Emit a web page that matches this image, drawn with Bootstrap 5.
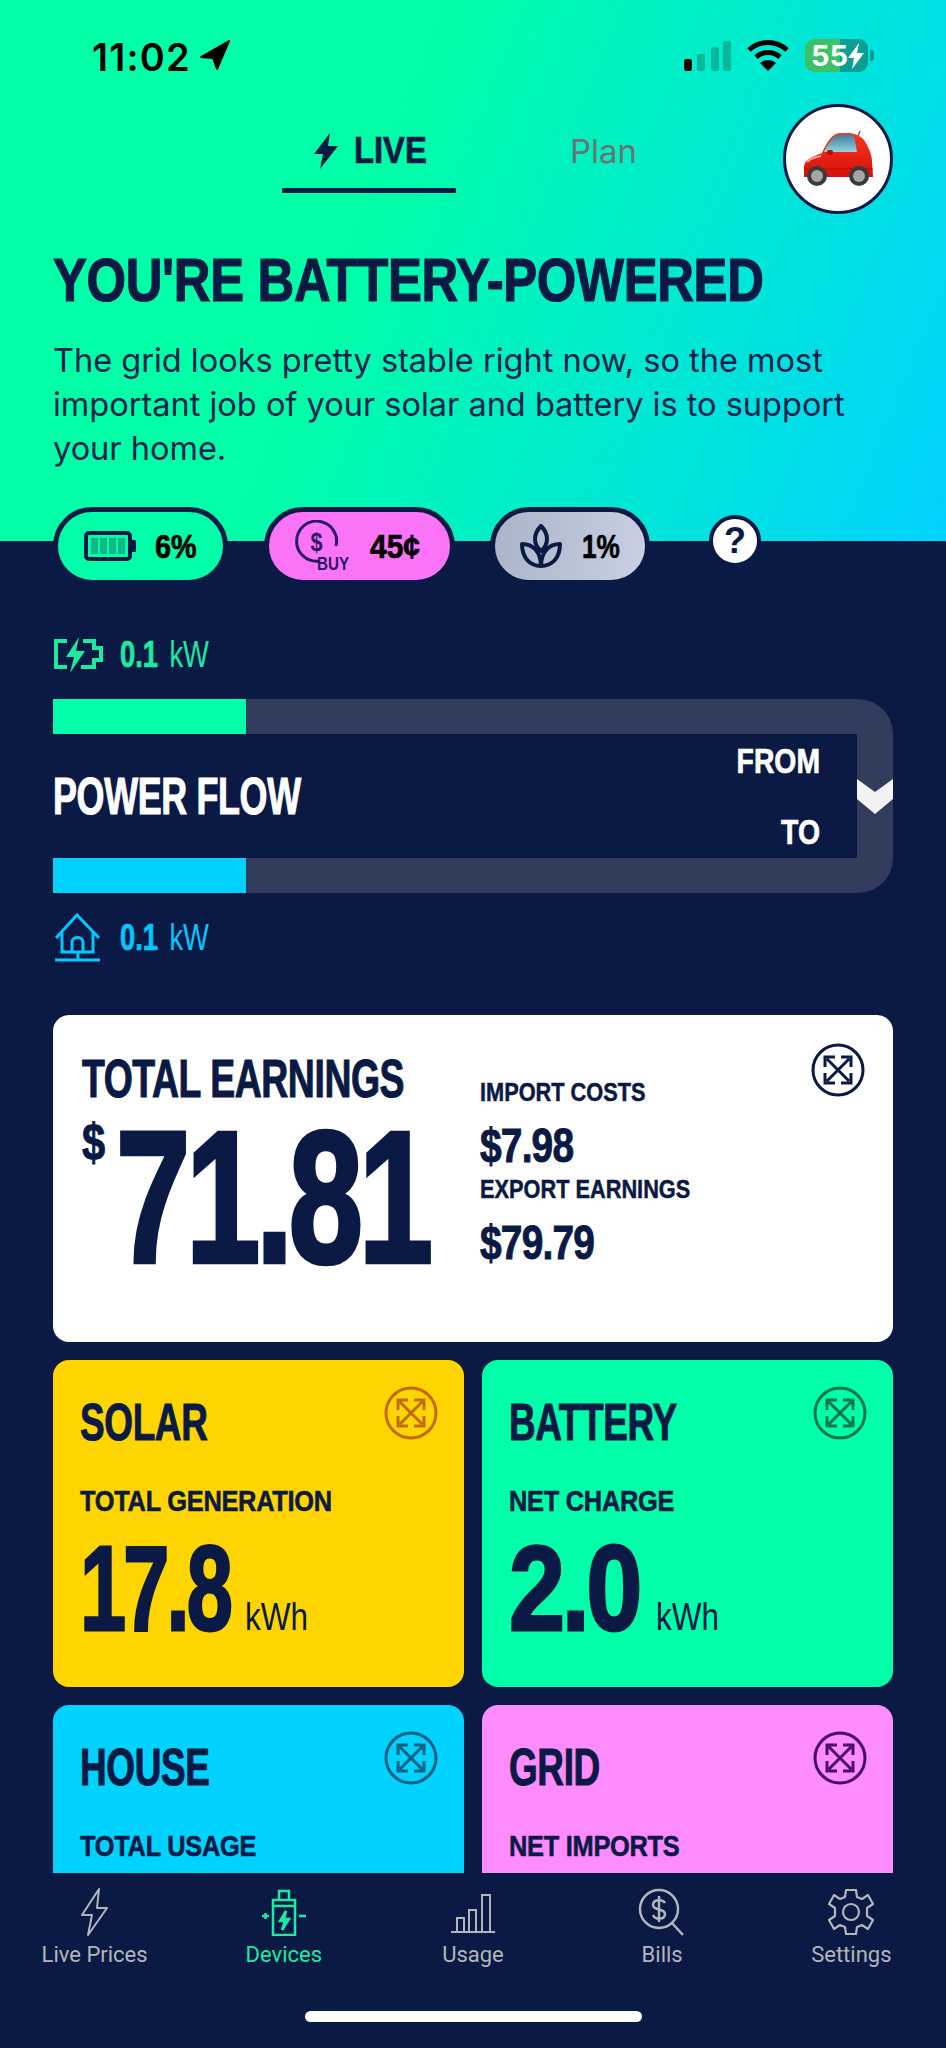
<!DOCTYPE html>
<html lang="en">
<head>
    <meta charset="UTF-8">
    <meta name="viewport" content="width=device-width, initial-scale=1.0">
    <title>Devices</title>
    <link href="https://cdn.jsdelivr.net/npm/bootstrap@5.3.0/dist/css/bootstrap.min.css" rel="stylesheet">
    <style>
        :root { --navy: #0b1a44; --mint: #00ffa8; --sky: #00d2ff; }
        body { background: var(--navy); color: var(--navy); font-family: "Inter", "Liberation Sans", sans-serif; }
        .app { width: 946px; height: 2048px; overflow: hidden; }
        /* no condensed face installed, so squeeze the bold one */
        .narrow { display: inline-block; white-space: nowrap; font-family: "Liberation Sans", sans-serif; font-weight: 700; -webkit-text-stroke: .02em currentColor; transform-origin: left center; transform: scaleX(var(--sx, .8)); }

        .hero { height: 541px; padding: 0 53px; background: linear-gradient(112deg, #00ffa6 38%, #00d2ff 100%); }
        .status-row { height: 104px; padding: 39px 19px 0 39px; }
        .clock { font-size: 38px; font-weight: 600; line-height: 36px; color: #000; letter-spacing: 1.2px; }
        .batt-pill { width: 63px; height: 33px; border-radius: 9px; color: #fff; font-size: 29px; font-weight: 700; line-height: 33px; padding-left: 6px;
            background: linear-gradient(90deg, #3cc168 55%, #0a9e94 55%); }
        .batt-tip { width: 4px; height: 11px; margin: 11px 0 0 2px; border-radius: 0 3px 3px 0; background: #0a9e94; }

        .tab-row { height: 110px; }
        .tab-live { width: 174px; height: 89px; border-bottom: 5px solid var(--navy); margin-left: 229px; padding: 29px 0 0 32px; font-size: 36px; line-height: 36px; --sx: .91; }
        .tab-plan { font-size: 33px; line-height: 36px; color: #667676; margin-left: 114px; padding-top: 29px; width: 213px; }
        .avatar { width: 110px; height: 110px; border: 3px solid var(--navy); background: #fff; border-radius: 50%; }

        .hero-title { font-size: 61px; line-height: 62px; margin: 35px 0 28px; letter-spacing: -.4px; --sx: .833; display: block; }
        .hero-text { font-size: 32.5px; line-height: 44px; margin: 0; white-space: nowrap; color: #10224c; }

        .chip-row { margin-top: 36px; height: 78px; position: relative; }
        .chip { height: 78px; border: 5px solid var(--navy); border-radius: 39px; color: #000; font-size: 34px; flex: none; }
        .chip-batt { width: 175px; background: var(--mint); padding-left: 26px; gap: 18px; --sx: .85; }
        .chip-buy { width: 191px; background: #fb74f8; margin-left: 36px; padding-left: 26px; gap: 20px; --sx: .88; }
        .chip-co2 { width: 160px; background: linear-gradient(100deg, #abb3c9, #c8d0e2); margin-left: 35px; padding-left: 25px; gap: 20px; --sx: .77; }
        .chip-help { width: 52px; height: 52px; border: 4px solid var(--navy); border-radius: 50%; background: #fff; font-family: "Liberation Sans", sans-serif; font-size: 36px; margin-left: 59px; margin-top: 8px; line-height: 1; font-weight: 700; }

        .flow { padding: 94px 53px 0; height: 474px; }
        .reading { font-size: 36px; line-height: 40px; height: 40px; gap: 17px; --sx: .76; }
        .reading .unit { font-weight: 400; -webkit-text-stroke: 0; margin-left: 15px; }
        .read-mint { color: #1de9a0; }
        .read-sky { color: #00c8ff; }
        .flow-track { margin: 24px 0 25px; }
        .flow-bar { height: 35px; background: #323d5e; }
        .flow-bar.top { border-top-right-radius: 36px; }
        .flow-bar.bottom { border-bottom-right-radius: 36px; }
        .flow-fill { height: 100%; }
        .flow-mid { height: 124px; }
        .flow-label { flex: 1; background: var(--navy); color: #fff; padding-right: 37px; }
        .flow-title { font-size: 52px; line-height: 52px; letter-spacing: -.5px; --sx: .69; }
        .flow-dir { font-size: 35px; line-height: 36px; gap: 35px; --sx: .81; }
        .flow-dir .narrow { transform-origin: right center; }
        .flow-rail { width: 36px; background: #323d5e; }

        .tiles { padding: 0 53px; }
        .tiles-clip { height: 858px; overflow: hidden; }
        .tile-row { --bs-gutter-x: 18px; --bs-gutter-y: 18px; margin-top: 0; }
        .tile { border: 0; border-radius: 16px; height: 327px; padding: 0 26px 0 27px; }
        .tile-total { background: #fff; padding: 0 28px 0 29px; }
        .total-left { width: 398px; flex: none; }
        .total-head { font-size: 53px; line-height: 52px; letter-spacing: -.6px; margin-top: 38px; --sx: .705; display: block; }
        .total-cur { width: 34px; flex: none; }
        .total-cur .narrow { font-size: 52px; line-height: 52px; margin-top: 11px; --sx: .8; }
        .total-num { font-size: 188px; line-height: 150px; letter-spacing: -6px; margin-top: 17px; --sx: .71; -webkit-text-stroke: .024em currentColor; }
        .total-side { padding-top: 62px; }
        .side-label { font-size: 25px; line-height: 30px; --sx: .87; display: block; }
        .side-val { font-size: 48px; line-height: 58px; letter-spacing: -1px; --sx: .81; display: block; margin-top: 10px; margin-bottom: -1px; }
        .tile-title { font-size: 52px; line-height: 52px; letter-spacing: -.5px; margin-top: 36px; --sx: .71; }
        .tile-sub { font-size: 29px; line-height: 34px; margin-top: 36px; letter-spacing: -.3px; --sx: .875; display: block; }
        .tile-figure { margin-top: 20px; }
        .tile-num { font-size: 120px; line-height: 100px; letter-spacing: -4px; -webkit-text-stroke: .024em currentColor; }
        .num-solar { width: 165px; flex: none; --sx: .69; }
        .num-batt { width: 147px; flex: none; --sx: .84; }
        .tile-unit { font-size: 38px; font-weight: 400; -webkit-text-stroke: 0; --sx: .83; }
        .tile-solar { background: #ffd500; }
        .tile-batt { background: var(--mint); }
        .tile-house { background: var(--sky); }
        .tile-grid { background: #ff8cff; }
        .grow-btn { width: 54px; height: 54px; flex: none; margin-top: 26px; }
        .tile-total .grow-btn { margin-top: 28px; }
        .grow-solar { color: #c46a00; }
        .grow-batt { color: #06744e; }
        .grow-house { color: #0a5f82; }
        .grow-grid { color: #4a0a6a; }

        .tab-bar { height: 175px; background: var(--navy); padding-top: 15px; }
        .tab-item { width: 20%; color: #b2b5ba; font-size: 22px; line-height: 26px; font-family: "Roboto", sans-serif; }
        .tab-item.on { color: #1de9a0; }
        .tab-item svg { display: block; height: 48px; margin-bottom: 6px; }
        .home-bar { width: 337px; height: 11px; border-radius: 6px; background: #fff; margin: 43px auto 0; }
        .sprite { position: absolute; width: 0; height: 0; }
    </style>
</head>
<body>
    <svg class="sprite">
        <symbol id="i-grow" viewBox="0 0 54 54">
            <g fill="none" stroke="currentColor" stroke-width="3">
                <circle cx="27" cy="27" r="25"/>
                <path d="M16 16 38 38M38 16 16 38M14 24V14H24M30 14H40V24M40 30V40H30M24 40H14V30"/>
            </g>
        </symbol>
        <linearGradient id="car-glass" x1="0" y1="0" x2="0" y2="1">
            <stop offset="0" stop-color="#3f7f9f"/><stop offset="1" stop-color="#92d3df"/>
        </linearGradient>
        <linearGradient id="car-paint" x1="0" y1="0" x2="0" y2="1">
            <stop offset="0" stop-color="#f5382a"/><stop offset="1" stop-color="#d80f08"/>
        </linearGradient>
    </svg>

    <div class="app d-flex flex-column">
        <div class="hero">
            <div class="status-row d-flex">
                <div class="clock d-flex align-items-start gap-2">11:02
                    <svg width="32" height="32" viewBox="0 0 32 32"><path d="M30 2 2 18l12 1 4 11z" fill="#000" stroke="#000" stroke-linejoin="round" stroke-width="2"/></svg>
                </div>
                <div class="d-flex ms-auto align-items-start">
                    <svg width="47" height="32" viewBox="0 0 47 32">
                        <rect x="0" y="20" width="8" height="12" rx="2" fill="#000"/>
                        <rect x="13" y="15" width="8" height="17" rx="2" fill="#0bb79a"/>
                        <rect x="27" y="8" width="8" height="24" rx="2" fill="#0bb79a"/>
                        <rect x="39" y="2" width="8" height="30" rx="2" fill="#0bb79a"/>
                    </svg>
                    <svg class="mx-3" width="42" height="33" viewBox="0 0 42 33" fill="none" stroke="#000" stroke-width="5">
                        <path d="M2 11C13 1 29 1 40 11M9 18C16 12 26 12 33 18"/>
                        <path d="M13 24 21 32 29 24C24 20 18 20 13 24Z" fill="#000" stroke="none"/>
                    </svg>
                    <div class="batt-pill d-flex align-items-center">55
                        <svg width="16" height="26" viewBox="0 0 16 26"><path d="M11 0 0 15h6l-2 11 12-16H9z" fill="#fff"/></svg>
                    </div>
                    <div class="batt-tip"></div>
                </div>
            </div>

            <div class="tab-row d-flex">
                <div class="tab-live d-flex gap-3 align-items-start">
                    <svg width="24" height="36" viewBox="0 0 24 36"><path d="M16 0 0 21h9L6 36 24 13H14z" fill="#0b1a44"/></svg>
                    <span class="narrow">LIVE</span>
                </div>
                <div class="tab-plan">Plan</div>
                <div class="avatar flex-shrink-0 d-flex align-items-center justify-content-center">
                    <svg width="70" height="56" viewBox="0 0 70 56">
                        <path d="M57 0 55 5" stroke="#666" stroke-width="1.5"/>
                        <path d="M1 46V35C2 29 8 26 19 22 24 11 29 3 36 2H47C54 3 60 6 63 12 66 18 69 24 69 30L70 46Z" fill="url(#car-paint)"/>
                        <path d="M21 21C25 12 30 5 36 4H50C52 8 53 15 54 21Z" fill="url(#car-glass)"/>
                        <path d="M1 38H70" stroke="#b50d06" stroke-width="1"/>
                        <path d="M4 31C7 28 12 26 18 25" stroke="#ff9d90" stroke-width="2" fill="none"/>
                        <rect x="24" y="19" width="6" height="5" rx="2" fill="#b50d06"/>
                        <circle cx="14" cy="45" r="10" fill="#3a3a3a"/><circle cx="14" cy="45" r="6" fill="#a5a5a5"/>
                        <circle cx="56" cy="45" r="10" fill="#3a3a3a"/><circle cx="56" cy="45" r="6" fill="#a5a5a5"/>
                    </svg>
                </div>
            </div>

            <h1 class="hero-title narrow">YOU'RE BATTERY-POWERED</h1>
            <p class="hero-text">The grid looks pretty stable right now, so the most<br>important job of your solar and battery is to support<br>your home.</p>

            <div class="chip-row d-flex">
                <div class="chip chip-batt d-flex align-items-center">
                    <svg width="53" height="30" viewBox="0 0 53 30">
                        <rect x="2" y="2" width="44" height="26" rx="3" fill="none" stroke="#0b1a44" stroke-width="4"/>
                        <path d="M48 9h3a1 1 0 0 1 1 1v10a1 1 0 0 1-1 1h-3z" fill="#0b1a44"/>
                        <path d="M7 7h7v16H7zM16 7h7v16h-7zM25 7h7v16h-7zM34 7h7v16h-7z" fill="#12b987"/>
                    </svg>
                    <span class="narrow">6%</span>
                </div>
                <div class="chip chip-buy d-flex align-items-center">
                    <svg width="55" height="52" viewBox="0 0 55 52" fill="none" stroke="#2b1a64" stroke-width="3">
                        <path d="M41 26A20 20 0 1 0 24 41"/>
                        <text x="21.5" y="31" font-size="25" text-anchor="middle" fill="#2b1a64" stroke="none" font-family="Liberation Sans, sans-serif" font-weight="700" textLength="12" lengthAdjust="spacingAndGlyphs">$</text>
                        <text x="22" y="50" font-size="19" fill="#2b1a64" stroke="none" font-family="Liberation Sans, sans-serif" font-weight="700" textLength="32" lengthAdjust="spacingAndGlyphs">BUY</text>
                    </svg>
                    <span class="narrow">45¢</span>
                </div>
                <div class="chip chip-co2 d-flex align-items-center">
                    <svg width="42" height="44" viewBox="0 0 42 44" fill="none" stroke="#0b1a44" stroke-width="4" stroke-linejoin="round">
                        <path d="M21 2C13 10 13 20 21 27 29 20 29 10 21 2Z"/>
                        <path d="M21 42C10 42 2 34 2 20 13 20 21 28 21 42 21 28 29 20 40 20 40 34 32 42 21 42Z"/>
                    </svg>
                    <span class="narrow">1%</span>
                </div>
                <div class="chip-help d-flex align-items-center justify-content-center flex-shrink-0">?</div>
            </div>
        </div>

        <div class="flow">
            <div class="reading read-mint d-flex align-items-center">
                <svg width="50" height="36" viewBox="0 0 50 36" fill="none" stroke="#1de9a0" stroke-width="4">
                    <path d="M14 4H3V30H14M30 4H41V11H48V23H41V30H28"/>
                    <path d="M26 0 13 20H21L17 36 32 14H23Z" fill="#1de9a0" stroke="none"/>
                </svg>
                <span class="narrow">0.1<span class="unit">kW</span></span>
            </div>
            <div class="flow-track">
                <div class="flow-bar top"><div class="flow-fill" style="width:193px;background:#00ffa8"></div></div>
                <div class="flow-mid d-flex">
                    <div class="flow-label d-flex align-items-center justify-content-between">
                        <div class="flow-title narrow">POWER FLOW</div>
                        <div class="flow-dir d-flex flex-column align-items-end">
                            <span class="narrow">FROM</span>
                            <span class="narrow">TO</span>
                        </div>
                    </div>
                    <div class="flow-rail d-flex align-items-center">
                        <svg width="36" height="35" viewBox="0 0 36 35"><path d="M0 0 18 13 36 0V20L18 35 0 20Z" fill="#f2f2f2"/></svg>
                    </div>
                </div>
                <div class="flow-bar bottom"><div class="flow-fill" style="width:193px;background:#00d2ff"></div></div>
            </div>
            <div class="reading read-sky d-flex align-items-center">
                <svg width="50" height="50" viewBox="0 0 50 50" fill="none" stroke="#00c8ff" stroke-width="3">
                    <path d="M3 25 24 2 46 25M9 19V39H40V19M19 39V29C19 23 30 23 30 29V39M25 39V47M2 47H47"/>
                </svg>
                <span class="narrow">0.1<span class="unit">kW</span></span>
            </div>
        </div>

        <div class="tiles flex-grow-1">
            <div class="tiles-clip">
                <div class="card tile tile-total flex-row">
                    <div class="total-left">
                        <div class="total-head narrow">TOTAL EARNINGS</div>
                        <div class="d-flex align-items-start">
                            <div class="total-cur"><span class="narrow">$</span></div>
                            <div class="total-num narrow">71.81</div>
                        </div>
                    </div>
                    <div class="total-side">
                        <div class="side-label narrow">IMPORT COSTS</div>
                        <div class="side-val narrow">$7.98</div>
                        <div class="side-label narrow">EXPORT EARNINGS</div>
                        <div class="side-val narrow">$79.79</div>
                    </div>
                    <svg class="grow-btn ms-auto"><use href="#i-grow"/></svg>
                </div>
                <div class="row tile-row">
                    <div class="col-6">
                        <div class="card tile tile-solar">
                            <div class="d-flex justify-content-between align-items-start">
                                <div class="tile-title narrow">SOLAR</div>
                                <svg class="grow-btn grow-solar"><use href="#i-grow"/></svg>
                            </div>
                            <div class="tile-sub narrow">TOTAL GENERATION</div>
                            <div class="tile-figure d-flex align-items-baseline">
                                <div class="tile-num num-solar narrow">17.8</div>
                                <div class="tile-unit narrow">kWh</div>
                            </div>
                        </div>
                    </div>
                    <div class="col-6">
                        <div class="card tile tile-batt">
                            <div class="d-flex justify-content-between align-items-start">
                                <div class="tile-title narrow">BATTERY</div>
                                <svg class="grow-btn grow-batt"><use href="#i-grow"/></svg>
                            </div>
                            <div class="tile-sub narrow">NET CHARGE</div>
                            <div class="tile-figure d-flex align-items-baseline">
                                <div class="tile-num num-batt narrow">2.0</div>
                                <div class="tile-unit narrow">kWh</div>
                            </div>
                        </div>
                    </div>
                    <div class="col-6">
                        <div class="card tile tile-house">
                            <div class="d-flex justify-content-between align-items-start">
                                <div class="tile-title narrow">HOUSE</div>
                                <svg class="grow-btn grow-house"><use href="#i-grow"/></svg>
                            </div>
                            <div class="tile-sub narrow">TOTAL USAGE</div>
                        </div>
                    </div>
                    <div class="col-6">
                        <div class="card tile tile-grid">
                            <div class="d-flex justify-content-between align-items-start">
                                <div class="tile-title narrow">GRID</div>
                                <svg class="grow-btn grow-grid"><use href="#i-grow"/></svg>
                            </div>
                            <div class="tile-sub narrow">NET IMPORTS</div>
                        </div>
                    </div>
                </div>
            </div>
        </div>

        <div class="tab-bar">
            <div class="d-flex">
                <div class="tab-item text-center">
                    <svg class="mx-auto" width="48" height="48" viewBox="0 0 48 48" fill="none" stroke="currentColor" stroke-width="2" stroke-linejoin="round">
                        <path d="M28 1 11 27H21L17 47 36 20H26Z"/>
                    </svg>
                    Live Prices
                </div>
                <div class="tab-item on text-center">
                    <svg class="mx-auto" width="48" height="48" viewBox="0 0 48 48" fill="none" stroke="currentColor" stroke-width="2.5">
                        <path d="M13 12H35V47H13ZM19 12V3H29V12M13 18H35M26 23 20 33H25L22 42 29 31H24ZM2 28H9M5.500 25V31M39 28H46"/>
                    </svg>
                    Devices
                </div>
                <div class="tab-item text-center">
                    <svg class="mx-auto" width="48" height="48" viewBox="0 0 48 48" fill="none" stroke="currentColor" stroke-width="2">
                        <path d="M2 44H46M8 44V30H15V44M20 44V22H27V44M33 44V7H41V44"/>
                    </svg>
                    Usage
                </div>
                <div class="tab-item text-center">
                    <svg class="mx-auto" width="48" height="48" viewBox="0 0 48 48" fill="none" stroke="currentColor" stroke-width="2.5">
                        <circle cx="21" cy="21" r="19"/>
                        <path d="M34 35 45 47M21 8V34M27 15C25 11 15 11 15 17 15 23 27 20 27 26 27 32 17 32 15 27"/>
                    </svg>
                    Bills
                </div>
                <div class="tab-item text-center">
                    <svg class="mx-auto" width="48" height="48" viewBox="0 0 48 48" fill="none" stroke="currentColor" stroke-width="2.2" stroke-linejoin="round">
                        <circle cx="24" cy="24" r="8"/>
                        <path d="M19 2H29L30 9 35 11 41 7 46 16 40 20V28L46 32 41 41 35 37 30 39 29 46H19L18 39 13 37 7 41 2 32 8 28V20L2 16 7 7 13 11 18 9Z"/>
                    </svg>
                    Settings
                </div>
            </div>
            <div class="home-bar"></div>
        </div>
    </div>

    <script src="https://cdn.jsdelivr.net/npm/bootstrap@5.3.0/dist/js/bootstrap.bundle.min.js"></script>
</body>
</html>
